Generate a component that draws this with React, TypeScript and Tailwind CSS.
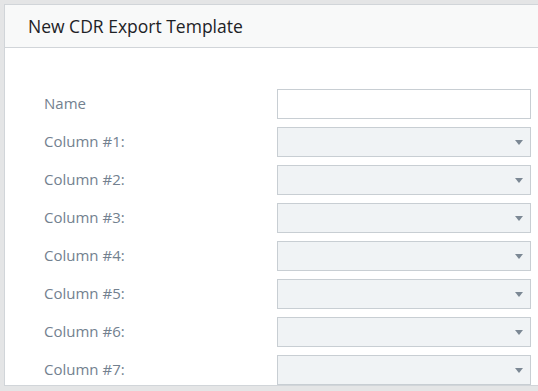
import React from 'react';

const columns = [1, 2, 3, 4, 5, 6, 7];

export default function App() {
  return (
    <div className="w-[538px] h-[391px] overflow-hidden bg-[#e4e5e6] pl-1 pt-1" style={{ fontFamily: '"Open Sans", sans-serif' }}>
      <div className="w-[600px] bg-white border border-[#d1d5d9]">
        {/* Header */}
        <div className="h-[43px] flex items-center pl-[23px] bg-[#f8f9f9] border-b border-[#d1d5d9]">
          <h5 className="text-[17.5px] font-medium text-[#1d2226]">New CDR Export Template</h5>
        </div>

        {/* Body */}
        <div className="pt-[41px] pl-[39px] flex flex-col gap-2">
          <FormRow label="Name">
            <input className="w-[254px] h-[30px] border border-[#c8ced3] bg-white outline-none" />
          </FormRow>
          {columns.map(n => (
            <FormRow key={n} label={`Column #${n}:`}>
              <SelectBox />
            </FormRow>
          ))}
        </div>
      </div>
    </div>
  );
}

function FormRow({ label, children }: { label: string; children: React.ReactNode }) {
  return (
    <div className="flex items-center h-[30px]">
      <label className="w-[233px] text-[15px] text-[#73818f] leading-[20px] -mt-[3px]">{label}</label>
      {children}
    </div>
  );
}

function SelectBox() {
  return (
    <div className="w-[254px] h-[30px] border border-[#c8ced3] bg-[#f0f3f5] flex items-center justify-end pr-[7px]">
      <svg width="8" height="5" viewBox="0 0 8 5">
        <path d="M0 0 L8 0 L4 5 Z" fill="#7c8894" />
      </svg>
    </div>
  );
}
